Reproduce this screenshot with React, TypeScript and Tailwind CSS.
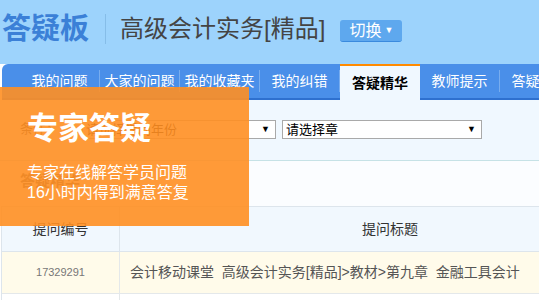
import React from 'react';

const TABS = ['我的问题', '大家的问题', '我的收藏夹', '我的纠错', '答疑精华', '教师提示', '答疑规则'];
const ACTIVE = '答疑精华';

function Select({ label, width }: { label: string; width: number }) {
  return (
    <div
      className="flex h-[19px] items-center justify-between border border-[#a9a9a9] bg-white pl-[3px] pr-[5px] text-[13px] leading-none text-black"
      style={{ width }}
    >
      <span>{label}</span>
      <span className="text-[9px]">▼</span>
    </div>
  );
}

export default function App() {
  return (
    <div className="relative h-[300px] w-[539px] overflow-hidden bg-white font-['Liberation_Sans','Noto_Sans_CJK_SC',sans-serif]">
      {/* header */}
      <div className="flex h-[64px] items-center bg-[#9dd3fc] pb-[6px]">
        <h1 className="pl-[2px] text-[29px] font-bold leading-none text-[#3b80d7]">答疑板</h1>
        <div className="ml-[16px] h-[30px] w-px bg-[#86bde8]" />
        <div className="ml-[14px] text-[24px] leading-none text-[#444]">高级会计实务[精品]</div>
        <button className="ml-[15px] mt-[4px] flex h-[22px] w-[62px] items-center justify-center gap-[3px] rounded-[3px] border-b border-[#3a8ade] bg-[#5ea8ee] text-[16px] leading-none text-white">
          切换<span className="text-[9px]">▼</span>
        </button>
      </div>

      {/* tabs */}
      <div className="ml-[2px] flex h-[36px] rounded-tl-[6px] border-b-2 border-[#2e70cf] bg-[#4a8fe9] pl-[18px]">
        {TABS.map((t) =>
          t === ACTIVE ? (
            <div
              key={t}
              className="-mb-[2px] flex h-[36px] w-[80px] shrink-0 items-center justify-center border-t-2 border-[#ff8a00] bg-[#f0f8ff] text-[14px] font-bold text-black"
            >
              {t}
            </div>
          ) : (
            <div key={t} className="flex w-[80px] shrink-0 items-center py-[6px]">
              <span className="flex-1 text-center text-[14px] text-white">{t}</span>
              <span className="h-full w-px bg-[#78adef]" />
            </div>
          ),
        )}
      </div>

      {/* filters */}
      <div className="flex h-[61px] items-center gap-[6px] border-b border-[#c6e2e6] bg-[#f0f8ff] pl-[20px] pb-[2px]">
        <span className="mr-[17px] text-[13px] text-[#333]">条件：</span>
        <Select label="请选择提问年份" width={194} />
        <Select label="请选择章" width={200} />
      </div>

      {/* heading */}
      <div className="flex h-[45px] items-center bg-[#fbfdff] pl-[20px] pb-[4px] text-[15px] font-bold text-[#555]">
        答疑精华
      </div>

      {/* table */}
      <div className="ml-[1px] w-[680px] border-t border-l border-[#dde5ec]">
        <div className="grid h-[45px] grid-cols-[118px_540px] bg-[#f1f8fe] text-[14px] text-[#333]">
          <div className="flex items-center justify-center border-r border-b border-[#dde5ec]">提问编号</div>
          <div className="flex items-center justify-center border-b border-[#dde5ec]">提问标题</div>
        </div>
        <div className="grid h-[42px] grid-cols-[118px_540px] bg-[#fffbea]">
          <div className="flex items-center justify-center border-r border-b border-[#e4e8ea] text-[11px] text-[#777]">
            17329291
          </div>
          <div className="flex items-center border-b border-[#e4e8ea] pl-[10px] text-[14px] text-[#555]">
            会计移动课堂&nbsp;&nbsp;高级会计实务[精品]&gt;教材&gt;第九章&nbsp;&nbsp;金融工具会计
          </div>
        </div>
        <div className="grid h-[42px] grid-cols-[118px_540px] bg-white">
          <div className="border-r border-[#e4e8ea]" />
          <div />
        </div>
      </div>

      {/* promo overlay */}
      <div className="absolute left-0 top-[87px] h-[139px] w-[249px] bg-[#ff8f22]/90 pl-[27px] pt-[25px] text-white">
        <div className="text-[31px] font-bold leading-[34px]">专家答疑</div>
        <div className="mt-[17px] text-[16px] leading-[20px]">专家在线解答学员问题</div>
        <div className="text-[16px] leading-[20px]">16小时内得到满意答复</div>
      </div>
    </div>
  );
}
